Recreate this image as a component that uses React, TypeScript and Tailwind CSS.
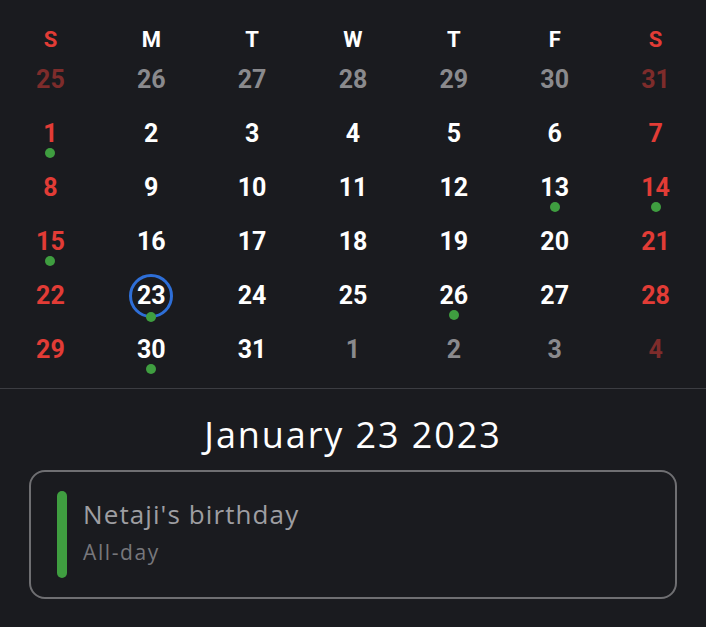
import React from "react";

type Day = { n: number; kind: "cur" | "dim"; dot?: boolean; today?: boolean };

const weeks: Day[][] = [
  [25, 26, 27, 28, 29, 30, 31].map((n) => ({ n, kind: "dim" as const })),
  [1, 2, 3, 4, 5, 6, 7].map((n) => ({ n, kind: "cur" as const, dot: n === 1 })),
  [8, 9, 10, 11, 12, 13, 14].map((n) => ({ n, kind: "cur" as const, dot: n === 13 || n === 14 })),
  [15, 16, 17, 18, 19, 20, 21].map((n) => ({ n, kind: "cur" as const, dot: n === 15 })),
  [22, 23, 24, 25, 26, 27, 28].map((n) => ({ n, kind: "cur" as const, dot: n === 23 || n === 26, today: n === 23 })),
  [29, 30, 31, 1, 2, 3, 4].map((n, i) => ({ n, kind: i < 3 ? ("cur" as const) : ("dim" as const), dot: i === 1 })),
];

const heads = ["S", "M", "T", "W", "T", "F", "S"];

function colorFor(d: Day, col: number) {
  const weekend = col === 0 || col === 6;
  if (d.kind === "dim") return weekend ? "text-[#7e2c2b]" : "text-[#8a8a8d]";
  return weekend ? "text-[#e23c36]" : "text-white";
}

export default function App() {
  return (
    <div
      className="w-[706px] h-[627px] bg-[#1a1b1f] overflow-hidden"
      style={{ fontFamily: "Roboto, 'Liberation Sans', sans-serif" }}
    >
      <div className="pt-[21px]">
        <div className="grid grid-cols-7 h-[38px] items-center">
          {heads.map((h, i) => (
            <div
              key={i}
              className={`text-center text-[22px] font-bold leading-[38px] ${
                i === 0 || i === 6 ? "text-[#e23c36]" : "text-white"
              }`}
            >
              {h}
            </div>
          ))}
        </div>
        {weeks.map((w, wi) => (
          <div key={wi} className="grid grid-cols-7">
            {w.map((d, ci) => (
              <div key={ci} className="h-[54px] flex flex-col items-center pt-[7px]">
                <div className="relative flex items-center justify-center h-[28px]">
                  {d.today && (
                    <div className="absolute left-1/2 top-1/2 -translate-x-1/2 -translate-y-1/2 w-[44px] h-[44px] rounded-full border-[3px] border-[#2e6fd8]" />
                  )}
                  <span className={`relative text-[25px] font-bold leading-[28px] ${colorFor(d, ci)}`}>
                    {d.n}
                  </span>
                </div>
                {d.dot && (
                  <div className={`relative w-[10px] h-[10px] rounded-full bg-[#3f9e40] ${d.today ? "mt-[2px]" : "mt-[0px]"}`} />
                )}
              </div>
            ))}
          </div>
        ))}
      </div>
      <div className="mt-[5px] border-t border-[#3c3d42]" />
      <div
        className="text-center text-white text-[36px] tracking-[1.9px] leading-[44px] mt-[24px]"
        style={{ fontFamily: "'Open Sans', Lato, sans-serif" }}
      >
        January 23 2023
      </div>
      <div
        className="mx-[29px] mt-[13px] h-[129px] rounded-[16px] border-2 border-[#6f6f72] flex pl-[26px] pt-[19px]"
        style={{ fontFamily: "'Open Sans', Lato, sans-serif" }}
      >
        <div className="w-[10px] h-[87px] rounded-full bg-[#3f9e40]" />
        <div className="ml-[16px] flex flex-col">
          <div className="text-[26px] tracking-[1.1px] leading-[34px] text-[#9e9ea2] mt-[6px]">Netaji's birthday</div>
          <div className="text-[21px] tracking-[1.6px] leading-[28px] text-[#77777b] mt-[7px]">All-day</div>
        </div>
      </div>
    </div>
  );
}
